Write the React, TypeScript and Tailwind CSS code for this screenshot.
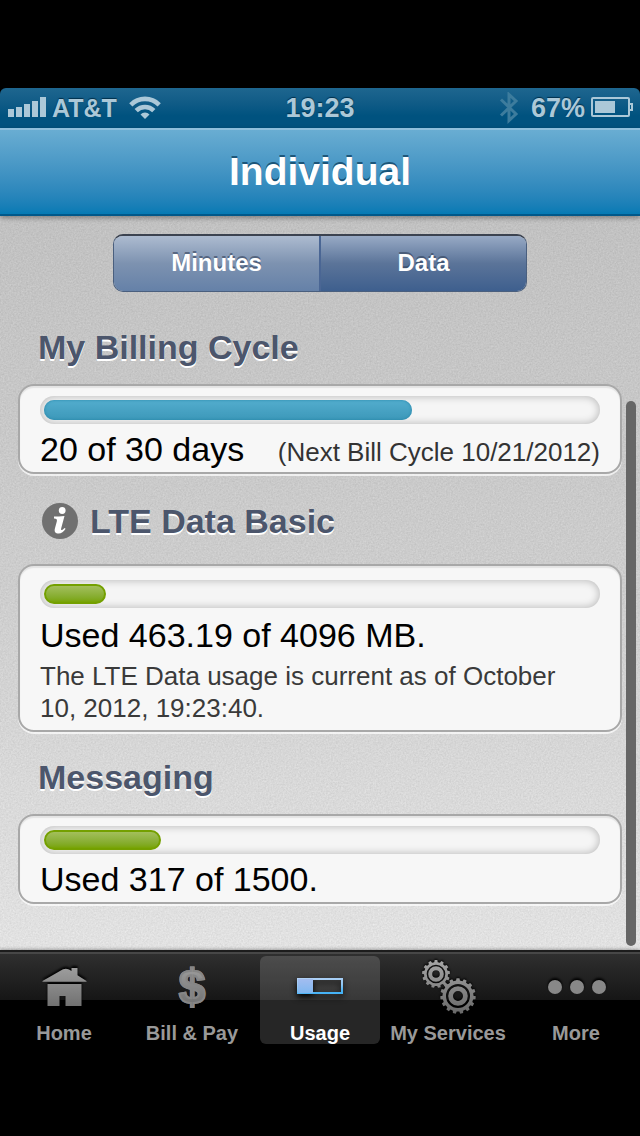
import React from "react";

const FONT = "font-['Liberation_Sans',Arial,sans-serif]";

function gearPath(cx: number, cy: number, body: number, tip: number, teeth: number) {
  const points: string[] = [];
  const step = (Math.PI * 2) / teeth;
  for (let i = 0; i < teeth; i++) {
    const a = i * step - Math.PI / 2;
    const corners: [number, number][] = [
      [body, -0.3],
      [tip, -0.2],
      [tip, 0.2],
      [body, 0.3],
    ];
    for (const [r, k] of corners) {
      points.push(
        `${(cx + r * Math.cos(a + k * step)).toFixed(2)} ${(cy + r * Math.sin(a + k * step)).toFixed(2)}`
      );
    }
  }
  return `M${points.join("L")}Z`;
}

function circlePath(cx: number, cy: number, r: number) {
  return `M${cx - r} ${cy}a${r} ${r} 0 1 0 ${2 * r} 0a${r} ${r} 0 1 0 ${-2 * r} 0Z`;
}

function IconGradient({ id }: { id: string }) {
  return (
    <defs>
      <linearGradient id={id} gradientUnits="userSpaceOnUse" x1="0" y1="0" x2="0" y2="54">
        <stop offset="0" stopColor="#a6a6a6" />
        <stop offset="1" stopColor="#686868" />
      </linearGradient>
    </defs>
  );
}

function HomeIcon() {
  return (
    <svg width="60" height="54" viewBox="0 0 60 54" aria-hidden="true" className="drop-shadow-[0_-2px_1px_#000]">
      <IconGradient id="home-fill" />
      <path
        fill="url(#home-fill)"
        d="M8.500 21.700v-.8L29 9.300q3-1.200 6 .2l2.500 1.500V8h6v7.200l9 5.700v.8ZM13.500 24h34v22h-16V36h-6v10h-12Z"
      />
    </svg>
  );
}

function BillIcon() {
  return (
    <span
      aria-hidden="true"
      className="bg-linear-to-b from-[#a6a6a6] to-[#686868] bg-clip-text text-5xl leading-[54px] font-bold text-transparent [-webkit-text-stroke:2px_#868686]"
    >
      $
    </span>
  );
}

function UsageIcon() {
  return (
    <svg width="60" height="54" viewBox="0 0 60 54" aria-hidden="true" className="drop-shadow-[0_3px_3px_#000]">
      <defs>
        <linearGradient id="usage-edge" x1="0" y1="0" x2="0.25" y2="1">
          <stop offset="0" stopColor="#b4d2f5" />
          <stop offset="0.6" stopColor="#93c8f5" />
          <stop offset="1" stopColor="#45b2f5" />
        </linearGradient>
        <linearGradient id="usage-fill" x1="0" y1="0" x2="0" y2="1">
          <stop offset="0" stopColor="#a3bdf0" />
          <stop offset="1" stopColor="#7fb7f0" />
        </linearGradient>
      </defs>
      <rect x="8" y="19" width="15" height="14" fill="url(#usage-fill)" />
      <path fill="url(#usage-edge)" fillRule="evenodd" d="M7 18h46v16H7ZM8 19v14h15V19ZM23 20v12h28V20Z" />
    </svg>
  );
}

function ServicesIcon() {
  return (
    <svg width="60" height="54" viewBox="0 0 60 54" aria-hidden="true" className="drop-shadow-[0_-1px_1px_#000]">
      <IconGradient id="gear-fill" />
      <g fill="url(#gear-fill)" fillRule="evenodd">
        <path d={gearPath(18, 14, 12, 14, 13) + circlePath(18, 14, 9.3)} />
        <path d={circlePath(18, 14, 7.8) + circlePath(18, 14, 3.8)} />
        <path d={gearPath(40, 36, 15.5, 17.8, 15) + circlePath(40, 36, 12)} />
        <path d={circlePath(40, 36, 9.8) + circlePath(40, 36, 5)} />
      </g>
    </svg>
  );
}

function MoreIcon() {
  return (
    <svg width="60" height="54" viewBox="0 0 60 54" aria-hidden="true" className="drop-shadow-[0_-2px_1px_#000]">
      <g fill="#888">
        <circle cx="9" cy="27" r="7" />
        <circle cx="31" cy="27" r="7" />
        <circle cx="53" cy="27" r="7" />
      </g>
    </svg>
  );
}

function StatusBar() {
  return (
    <div className="grid h-10 grid-cols-3 items-center rounded-t-md bg-linear-to-b from-[#1e668f] to-[#00527f] to-70% px-2 text-[27px] leading-10 font-bold text-[#abc8d8] [text-shadow:0_-1px_1px_#00304c]">
      <div className="flex items-center gap-[6px]">
        <svg width="38" height="22" viewBox="0 0 38 22" fill="currentColor" role="img" aria-label="Signal strength">
          <path d="M0 12h6v8H0ZM8 10h6v10H8ZM16 7h6v13h-6ZM24 4h6v16h-6ZM32 0h6v20h-6Z" />
        </svg>
        <span className="text-[25px]">AT&amp;T</span>
        <svg className="ml-[6px]" width="32" height="24" viewBox="0 0 32 24" role="img" aria-label="Wi-Fi">
          <g fill="none" stroke="currentColor" strokeWidth="4.600">
            <path d="M1.800 8.800a20 20 0 0 1 28.400 0" />
            <path d="M7.200 14.600a12.500 12.500 0 0 1 17.600 0" />
          </g>
          <path fill="currentColor" d="M16 23 11.500 18.400a6.400 6.400 0 0 1 9 0Z" />
        </svg>
      </div>
      <time className="text-center">19:23</time>
      <div className="flex items-center justify-end">
        <svg className="mr-3" width="20" height="32" viewBox="0 0 20 32" role="img" aria-label="Bluetooth">
          <path d="M2 7.500 17 22 10 28.500V2.500L17 9 2 23.500" fill="none" stroke="#3d7c9d" strokeWidth="3" />
        </svg>
        <span>67%</span>
        <svg className="-mr-[2px] ml-[6px]" width="43" height="22" viewBox="0 0 43 22" role="img" aria-label="Battery">
          <rect x="1" y="1" width="37" height="18" rx="1" fill="none" stroke="currentColor" strokeWidth="2" />
          <rect x="4" y="4" width="20" height="12" fill="currentColor" />
          <path d="M38 7h3v6h-3" fill="none" stroke="currentColor" strokeWidth="2" />
        </svg>
      </div>
    </div>
  );
}

const TRACK =
  "h-7 rounded-full bg-[#f5f5f5] p-1 shadow-[inset_0_0_8px_rgba(0,0,0,0.28)]";
const BLUE = "bg-linear-to-b from-[#53adce] to-[#3c98b9] shadow-[inset_0_0_3px_#2585a8]";
const GREEN = "border-2 border-[#74a000] bg-linear-to-b from-[#a3bf5b] to-[#78a400]";

function Meter({ label, value, max, tone }: { label: string; value: number; max: number; tone: string }) {
  return (
    <div
      className={TRACK}
      role="progressbar"
      aria-label={label}
      aria-valuenow={value}
      aria-valuemin={0}
      aria-valuemax={max}
    >
      <div className={`h-5 rounded-full ${tone}`} style={{ width: `${(value / max) * 100}%` }} />
    </div>
  );
}

const CARD =
  "rounded-[16px] border-2 border-[#a8a8a8] bg-[#f7f7f7] px-5 shadow-[0_2px_0_rgba(255,255,255,0.7),inset_0_2px_1px_#e4e4e4]";
const HEADING = "px-5 text-[34px] leading-10 font-bold text-[#4c566c] [text-shadow:0_2px_0_#fff]";

const TABS = [
  { label: "Home", Icon: HomeIcon },
  { label: "Bill & Pay", Icon: BillIcon },
  { label: "Usage", Icon: UsageIcon },
  { label: "My Services", Icon: ServicesIcon },
  { label: "More", Icon: MoreIcon },
];

export default function App() {
  const [segment, setSegment] = React.useState("Data");
  const [tab, setTab] = React.useState("Usage");

  return (
    <div className={`flex min-h-screen flex-col bg-black py-[88px] ${FONT}`}>
      <StatusBar />
      <header className="z-10 flex h-[88px] items-center justify-center border-t-2 border-b-2 border-t-[#8ebfdc] border-b-[#00588a] bg-linear-to-b from-[#69add2] to-[#047ab4] shadow-[0_2px_5px_rgba(0,0,0,0.35)]">
        <h1 className="text-[39px] leading-[48px] font-bold text-white [text-shadow:0_-2px_0_rgba(0,45,75,0.65)]">
          Individual
        </h1>
      </header>

      <main className="relative isolate flex-1 bg-linear-to-b from-[#c4c4c4] via-[#d2d2d2] to-[#ebebeb] px-[18px] pt-[18px] pb-11">
        <svg className="absolute inset-0 -z-10 h-full w-full opacity-20" aria-hidden="true">
          <filter id="paper" x="0" y="0" width="100%" height="100%" colorInterpolationFilters="sRGB">
            <feTurbulence type="fractalNoise" baseFrequency="0.6" numOctaves="2" />
            <feColorMatrix values="0.6 0.3 0 0 0.25  0.6 0.3 0 0 0.25  0.6 0.3 0 0 0.25  0 0 0 0 0.8" />
          </filter>
          <rect width="100%" height="100%" filter="url(#paper)" />
        </svg>

        <div className="mx-auto flex h-[58px] w-[414px] max-w-full overflow-hidden rounded-[10px] border border-t-2 border-[#4a5f7e] border-t-[#3c4350]">
          {["Minutes", "Data"].map((name) => (
            <button
              key={name}
              type="button"
              aria-pressed={segment === name}
              onClick={() => setSegment(name)}
              className={`flex-1 bg-linear-to-b pb-[2px] text-2xl font-bold text-white [text-shadow:0_-2px_0_rgba(50,65,90,0.6)] ${
                segment === name
                  ? "from-[#98aac5] via-[#5b7499] to-[#3e5f8e]"
                  : "from-[#adbbd0] via-[#7d92b0] to-[#6581a8]"
              } ${name === "Data" ? "border-l-2 border-[#4a6694]" : ""}`}
            >
              {name}
            </button>
          ))}
        </div>

        <h2 className={`mt-[35px] ${HEADING}`}>My Billing Cycle</h2>
        <section className={`mt-[17px] pt-[10px] pb-[3px] ${CARD}`}>
          <Meter label="Billing cycle days" value={20} max={30} tone={BLUE} />
          <div className="mt-[5px] flex items-baseline justify-between">
            <p className="text-[34px] leading-10 text-black">20 of 30 days</p>
            <p className="text-[26px] leading-8 text-[#333]">(Next Bill Cycle 10/21/2012)</p>
          </div>
        </section>

        <h2 className={`mt-[27px] flex items-center gap-3 ${HEADING}`}>
          <button type="button" aria-label="About LTE Data Basic" className="ml-1">
            <svg width="36" height="36" viewBox="0 0 36 36" aria-hidden="true">
              <circle cx="18" cy="18" r="18" fill="#707070" />
              <circle cx="20.200" cy="7.500" r="3.400" fill="#fff" />
              <path
                fill="#fff"
                d="M12 13.600c3.500 0 6.500-.2 10.500-.7l-3.300 12.300c-.4 1.800.2 2.300 1.300 1.600.8-.5 1.300-1.100 1.900-1.900l1.200.8c-1.900 3.200-4.300 4.700-6.900 4.700-3.500 0-4.600-2-3.800-5l1.900-7c.5-2-.2-2.700-2.800-2.800Z"
              />
            </svg>
          </button>
          <span>LTE Data Basic</span>
        </h2>
        <section className={`mt-[23px] pt-[14px] pb-[6px] ${CARD}`}>
          <Meter label="LTE data used" value={463.19} max={4096} tone={GREEN} />
          <p className="mt-[7px] text-[34px] leading-10 text-black">Used 463.19 of 4096 MB.</p>
          <p className="mt-[5px] pr-5 text-[26px] leading-8 text-[#3a3a3a]">
            The LTE Data usage is current as of October 10, 2012, 19:23:40.
          </p>
        </section>

        <h2 className={`mt-[25px] ${HEADING}`}>Messaging</h2>
        <section className={`mt-[17px] pt-[10px] pb-[3px] ${CARD}`}>
          <Meter label="Messages used" value={317} max={1500} tone={GREEN} />
          <p className="mt-[5px] text-[34px] leading-10 text-black">Used 317 of 1500.</p>
        </section>

        <div className="absolute right-1 bottom-1 h-[545px] w-[10px] rounded-full bg-[#666]" aria-hidden="true" />
      </main>

      <nav className="z-10 grid h-[98px] grid-cols-5 border-t-2 border-[#1c1c1c] bg-linear-to-b from-[#303030] from-0% via-[#161616] via-50% to-black to-50% pt-1 shadow-[0_-1px_3px_rgba(0,0,0,0.3),inset_0_2px_0_#474747]">
        {TABS.map(({ label, Icon }) => (
          <button
            key={label}
            type="button"
            aria-current={tab === label ? "page" : undefined}
            onClick={() => setTab(label)}
            className={`mx-1 flex h-[88px] flex-col items-center justify-between rounded-md pt-1 pb-px text-xl leading-5 font-bold whitespace-nowrap ${
              tab === label ? "bg-white/15 text-white" : "text-[#999]"
            }`}
          >
            <Icon />
            <span>{label}</span>
          </button>
        ))}
      </nav>
    </div>
  );
}
